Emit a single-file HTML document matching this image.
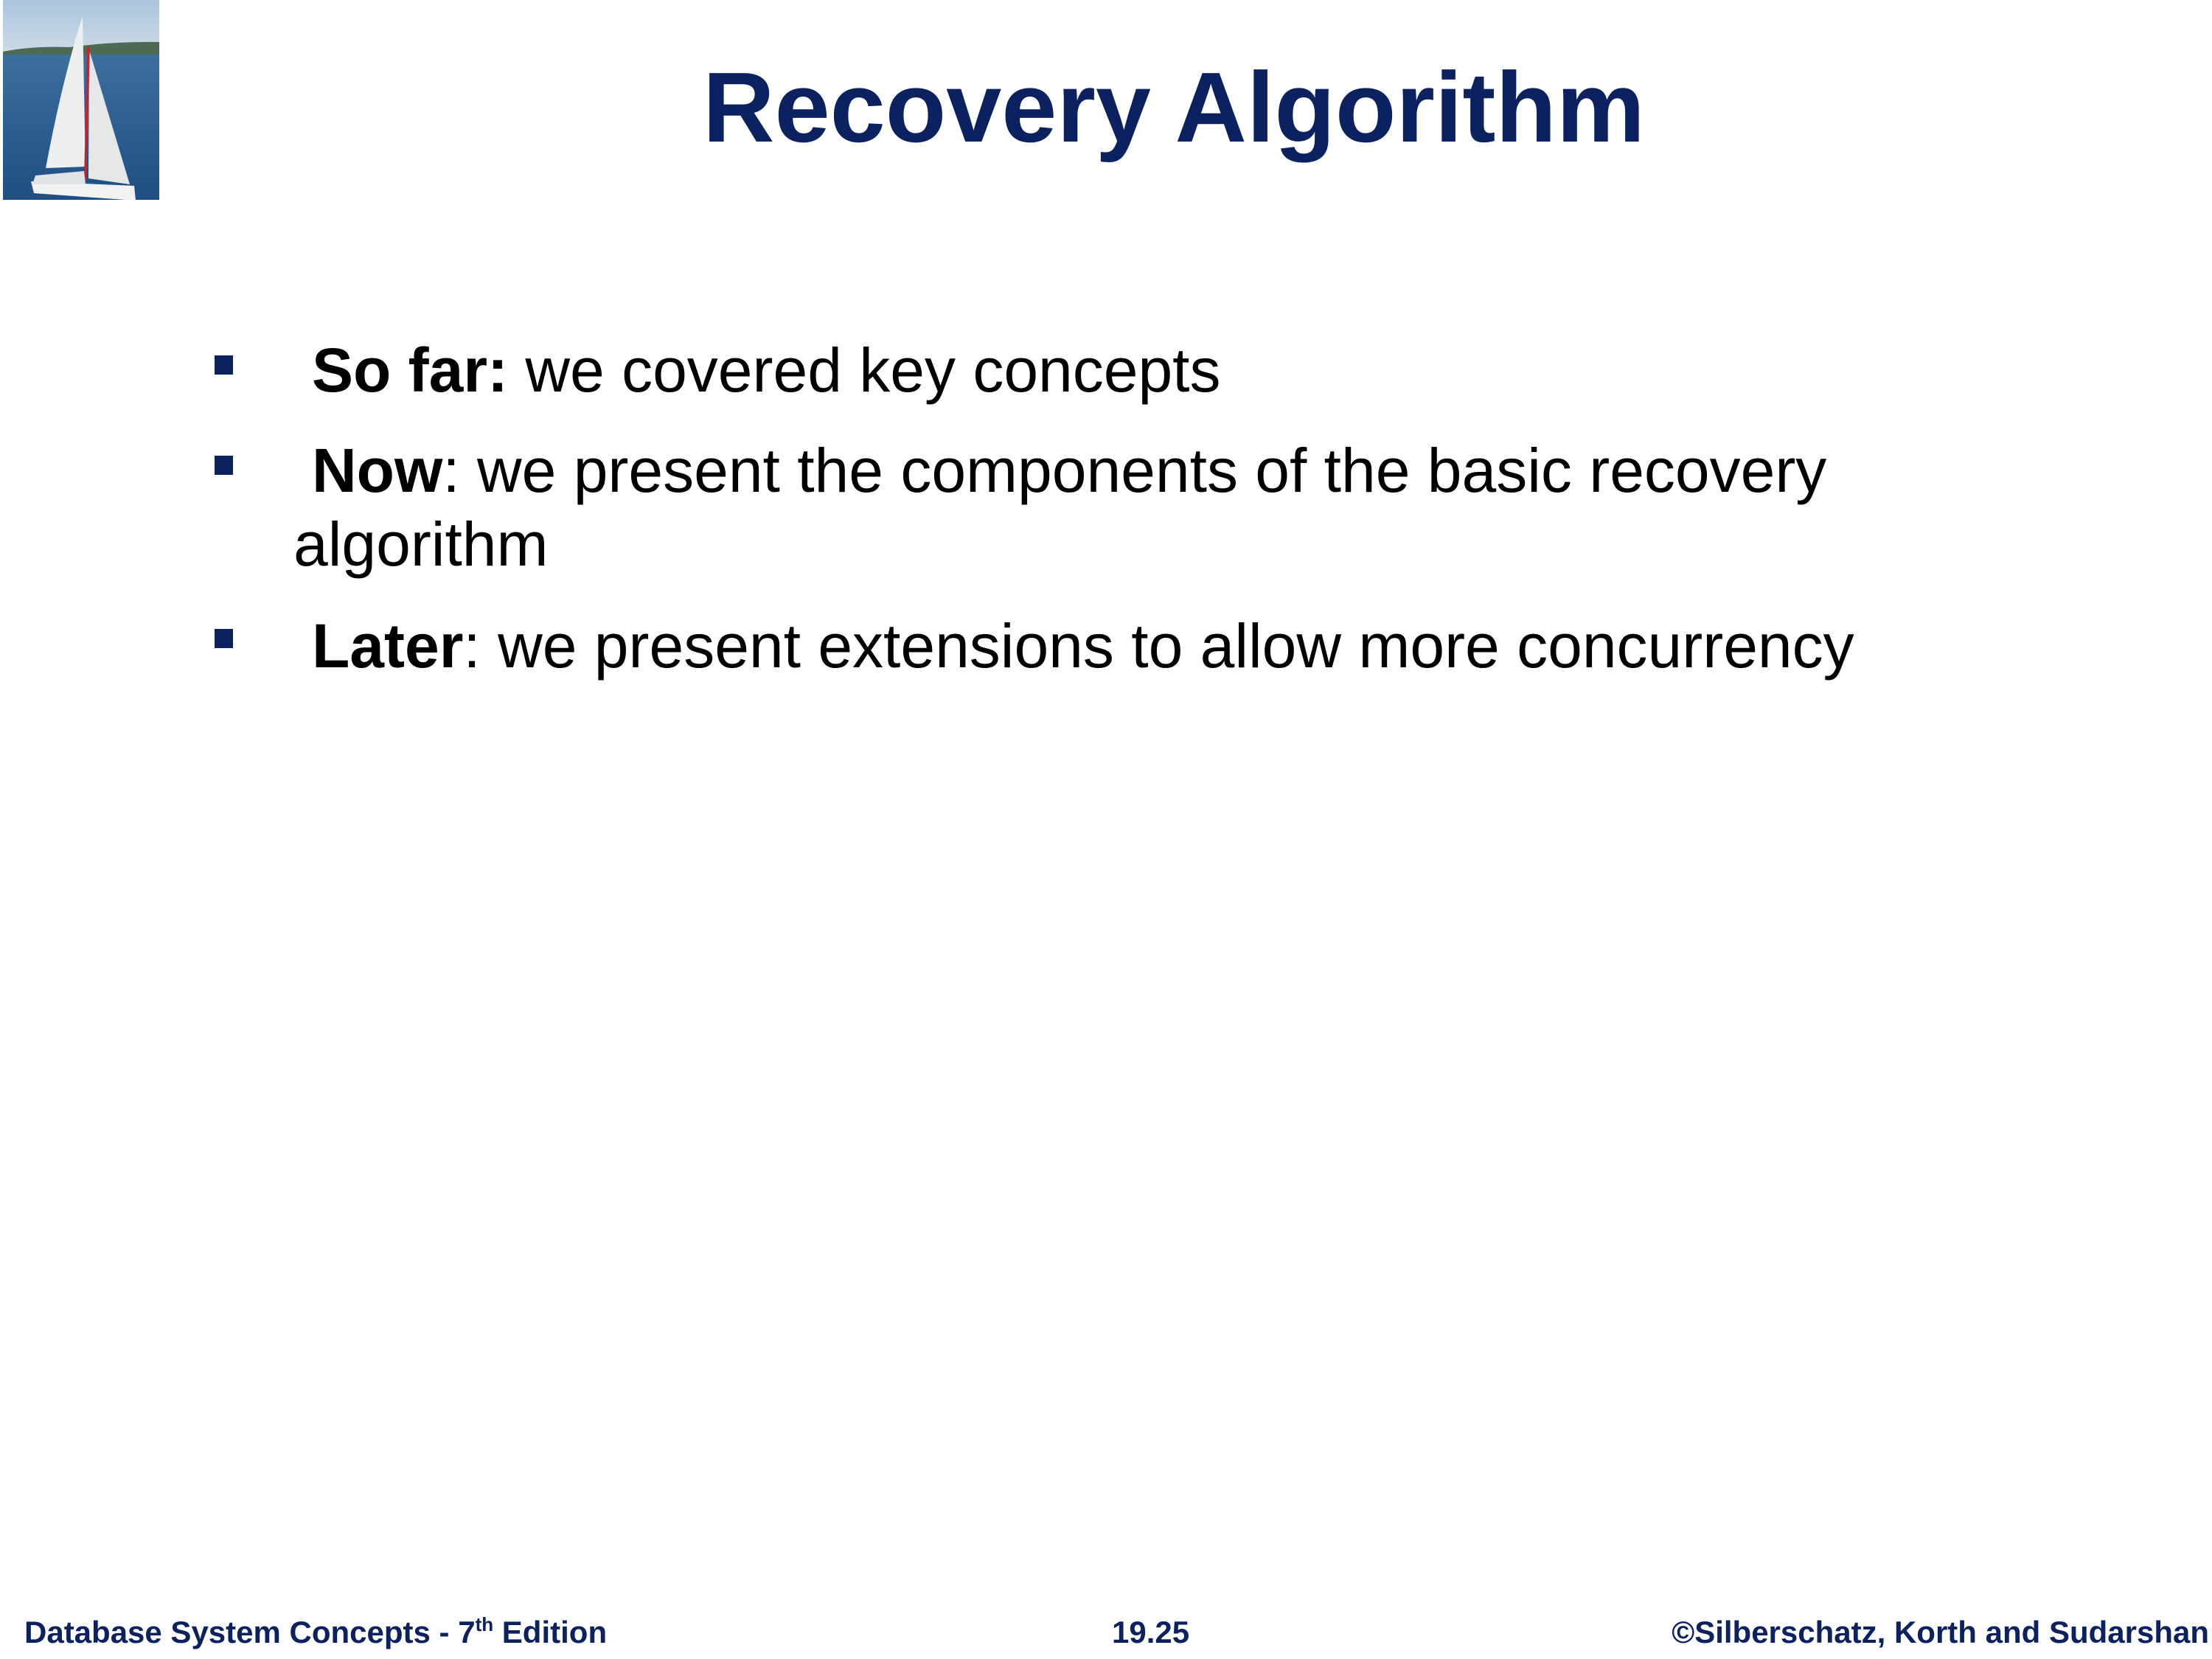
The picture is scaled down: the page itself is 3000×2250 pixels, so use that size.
<!DOCTYPE html>
<html><head><meta charset="utf-8">
<style>
html,body{margin:0;padding:0;background:#fff;}
body{width:3000px;height:2250px;position:relative;overflow:hidden;font-family:"Liberation Sans",Arial,sans-serif;}
.t{position:absolute;white-space:nowrap;}
#title{left:0;width:3184px;text-align:center;top:78px;font-size:135px;font-weight:bold;color:#0c2260;line-height:1;}
.b{position:absolute;left:291px;width:25px;height:26px;background:#0c2260;}
.line{position:absolute;left:423px;font-size:84px;color:#000;line-height:1;white-space:nowrap;}
.f{position:absolute;top:2193px;font-size:42px;font-weight:bold;color:#0c2260;line-height:1;white-space:nowrap;}
</style></head><body>
<svg style="position:absolute;left:4px;top:0" width="212" height="271" viewBox="0 0 212 271">
<defs>
<linearGradient id="sky" x1="0" y1="0" x2="0" y2="1"><stop offset="0" stop-color="#a9c4dc"/><stop offset="1" stop-color="#cfdce8"/></linearGradient>
<linearGradient id="sea" x1="0" y1="0" x2="0" y2="1"><stop offset="0" stop-color="#3d6f9e"/><stop offset="0.5" stop-color="#2c5e91"/><stop offset="1" stop-color="#1f4f82"/></linearGradient>
</defs>
<rect width="212" height="75" fill="url(#sky)"/>
<path d="M0 70 Q40 62 90 64 Q150 56 212 57 L212 76 L0 76Z" fill="#4d6a54"/>
<rect y="74" width="212" height="197" fill="url(#sea)"/>
<path d="M108 22 L112 226 L58 228 Q80 110 108 22Z" fill="#eef0f0"/>
<path d="M117 68 L172 250 L116 242Z" fill="#e6e8e8"/>
<path d="M114 64 L118 62 L113 244 L110 244Z" fill="#c8232c"/>
<path d="M38 246 L178 252 L180 272 L42 262 Z" fill="#f2f2f2"/>
<path d="M44 238 L110 232 L112 250 L40 250Z" fill="#dfe3e6"/>
</svg>
<div class="t" id="title">Recovery Algorithm</div>

<div class="b" style="top:482px"></div>
<div class="line" style="top:460px"><b>So far:</b> we covered key concepts</div>
<div class="b" style="top:618px"></div>
<div class="line" style="top:596px"><b>Now</b>: we present the components of the basic recovery</div>
<div class="line" style="top:696px;left:398px">algorithm</div>
<div class="b" style="top:853px"></div>
<div class="line" style="top:834px"><b>Later</b>: we present extensions to allow more concurrency</div>

<div class="f" style="left:33px">Database System Concepts - 7<sup style="font-size:26px;vertical-align:16px;line-height:0">th</sup> Edition</div>
<div class="f" style="left:1508px">19.25</div>
<div class="f" style="right:4px">©Silberschatz, Korth and Sudarshan</div>
</body></html>
